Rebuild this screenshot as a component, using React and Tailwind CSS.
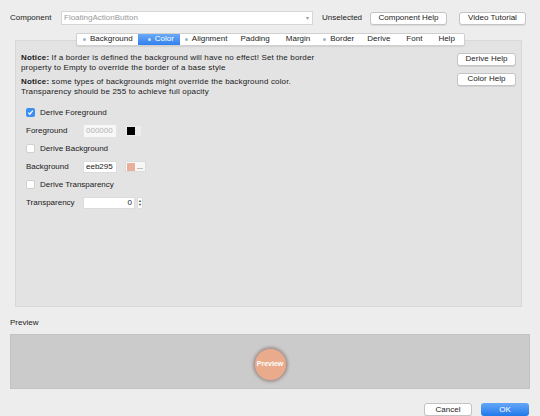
import { useState } from 'react';

const tabs = [
  { name: 'Background', dot: true },
  { name: 'Color', dot: true },
  { name: 'Alignment', dot: true },
  { name: 'Padding' },
  { name: 'Margin' },
  { name: 'Border', dot: true },
  { name: 'Derive' },
  { name: 'Font' },
  { name: 'Help' },
];

function MacButton({ children, className = '' }) {
  return (
    <button
      className={`h-[13px] bg-white border border-[#c4c4c4] rounded-[3px] shadow-[0_1px_0_rgba(0,0,0,0.08)] text-[8px] leading-none text-[#222] ${className}`}
    >
      {children}
    </button>
  );
}

function Checkbox({ checked, label }) {
  return (
    <label className="flex items-center gap-[5px] h-[12px]">
      {checked ? (
        <span className="w-[9px] h-[9px] rounded-[2px] bg-[#3d8ef2] flex items-center justify-center">
          <svg width="7" height="7" viewBox="0 0 8 8">
            <path d="M1.5 4.2 L3.2 6 L6.6 1.8" fill="none" stroke="white" strokeWidth="1.4" />
          </svg>
        </span>
      ) : (
        <span className="w-[9px] h-[9px] rounded-[2px] bg-white border border-[#d0d0d0]" />
      )}
      <span>{label}</span>
    </label>
  );
}

export default function App() {
  const [active, setActive] = useState('Color');

  return (
    <div
      className="w-[540px] h-[416px] bg-[#ededed] flex flex-col text-[8px] text-[#1a1a1a] overflow-hidden"
      style={{ fontFamily: '"Liberation Sans", Arial, sans-serif' }}
    >
      {/* component selector row */}
      <div className="flex items-center h-[14px] mt-[11px] pl-[10px] pr-[14px]">
        <span className="w-[51px]">Component</span>
        <div className="w-[252px] h-[14px] bg-white border border-[#d6d6d6] flex items-center justify-between pl-[2px] pr-[3px]">
          <span className="text-[#9a9a9a]">FloatingActionButton</span>
          <span className="text-[#999] text-[6px]">▾</span>
        </div>
        <span className="ml-[9px]">Unselected</span>
        <MacButton className="ml-[8px] w-[77px]">Component Help</MacButton>
        <MacButton className="ml-auto w-[67px]">Video Tutorial</MacButton>
      </div>

      {/* tab strip sitting on the panel's top edge */}
      <div className="flex ml-[76px] mt-[8px] h-[13px] -mb-[6px] relative z-10 self-start bg-white border border-[#d0d0d0] rounded-[2px] shadow-[0_1px_1px_rgba(0,0,0,0.08)]">
        {tabs.map((t) => {
          const on = t.name === active;
          return (
            <button
              key={t.name}
              onClick={() => setActive(t.name)}
              className={`flex items-center gap-[4px] h-full leading-none ${
                on
                  ? 'bg-gradient-to-b from-[#6aa9f6] to-[#2f80ee] text-white pl-[10px] pr-[6px]'
                  : 'text-[#222] px-[5px]'
              } ${t.name === 'Background' ? 'pl-[6px]' : ''} ${t.name === 'Help' ? 'pr-[6px]' : ''}`}
            >
              {t.dot && (
                <span className={`w-[3px] h-[3px] rounded-full ${on ? 'bg-[#cfe2fb]' : 'bg-[#9fb3c8]'}`} />
              )}
              <span className={t.dot ? '' : 'px-[3px]'}>{t.name}</span>
            </button>
          );
        })}
      </div>

      {/* style panel */}
      <div className="mx-[15px] w-[507px] h-[268px] bg-[#e3e3e3] border border-[#d8d8d8] flex flex-col pl-[5px] pr-[5px] pt-[12px]">
        <div className="flex justify-between">
          <div className="flex flex-col gap-[4px] leading-[10px] tracking-[0.02em]">
            <p>
              <b>Notice:</b> If a border is defined the background will have no effect! Set the border
              <br />
              property to Empty to override the border of a base style
            </p>
            <p>
              <b>Notice:</b> some types of backgrounds might override the background color.
              <br />
              Transparency should be 255 to achieve full opacity
            </p>
          </div>
          <div className="flex flex-col gap-[7px]">
            <MacButton className="w-[59px]">Derive Help</MacButton>
            <MacButton className="w-[59px]">Color Help</MacButton>
          </div>
        </div>

        <div className="flex flex-col gap-[6px] mt-[10px] pl-[5px]">
          <Checkbox checked label="Derive Foreground" />
          <div className="flex items-center h-[12px]">
            <span className="w-[58px]">Foreground</span>
            <div className="w-[32px] h-[12px] bg-[#f7f7f7] flex items-center px-[2px] text-[#b3b3b3]">000000</div>
            <div className="ml-[10px] flex items-center h-[10px] bg-[#ececec] pr-[6px] pl-[1px]">
              <span className="w-[8px] h-[8px] bg-black" />
            </div>
          </div>
          <Checkbox label="Derive Background" />
          <div className="flex items-center h-[12px]">
            <span className="w-[57px]">Background</span>
            <div className="w-[34px] h-[12px] bg-white border border-[#dcdcdc] flex items-center px-[2px]">eeb295</div>
            <div className="ml-[8px] flex items-center gap-[2px] h-[11px] bg-[#f7f7f7] border border-[#dcdcdc] pl-[1px] pr-[2px]">
              <span className="w-[8px] h-[8px] bg-[#e8b09a]" />
              <span className="text-[7px] leading-none">...</span>
            </div>
          </div>
          <Checkbox label="Derive Transparency" />
          <div className="flex items-center h-[12px]">
            <span className="w-[57px]">Transparency</span>
            <div className="w-[52px] h-[12px] bg-white border border-[#dcdcdc] flex items-center justify-end px-[2px]">0</div>
            <div className="ml-[2px] w-[6px] h-[12px] bg-white border border-[#dcdcdc] rounded-[2px] flex flex-col items-center justify-center text-[4px] leading-[4px] text-[#555]">
              <span>▲</span>
              <span>▼</span>
            </div>
          </div>
        </div>
      </div>

      {/* preview */}
      <div className="ml-[10px] mt-[11px] h-[10px] leading-[10px]">Preview</div>
      <div className="mx-[10px] mt-[6px] h-[55px] bg-[#cbcbcb] border border-[#c2c2c2] flex items-center justify-center pt-[5px]">
        <div className="w-[31px] h-[31px] rounded-full bg-[#e9ab8c] shadow-[0_0_3px_2px_rgba(110,80,70,0.45)] flex items-center justify-center text-white font-bold text-[7px]">
          Preview
        </div>
      </div>

      {/* dialog buttons */}
      <div className="flex justify-end gap-[9px] mt-[14px] pr-[11px]">
        <MacButton className="w-[48px]">Cancel</MacButton>
        <button className="w-[48px] h-[13px] rounded-[3px] bg-gradient-to-b from-[#63a6f6] to-[#1f79ea] text-white text-[8px] leading-none">
          OK
        </button>
      </div>
    </div>
  );
}
